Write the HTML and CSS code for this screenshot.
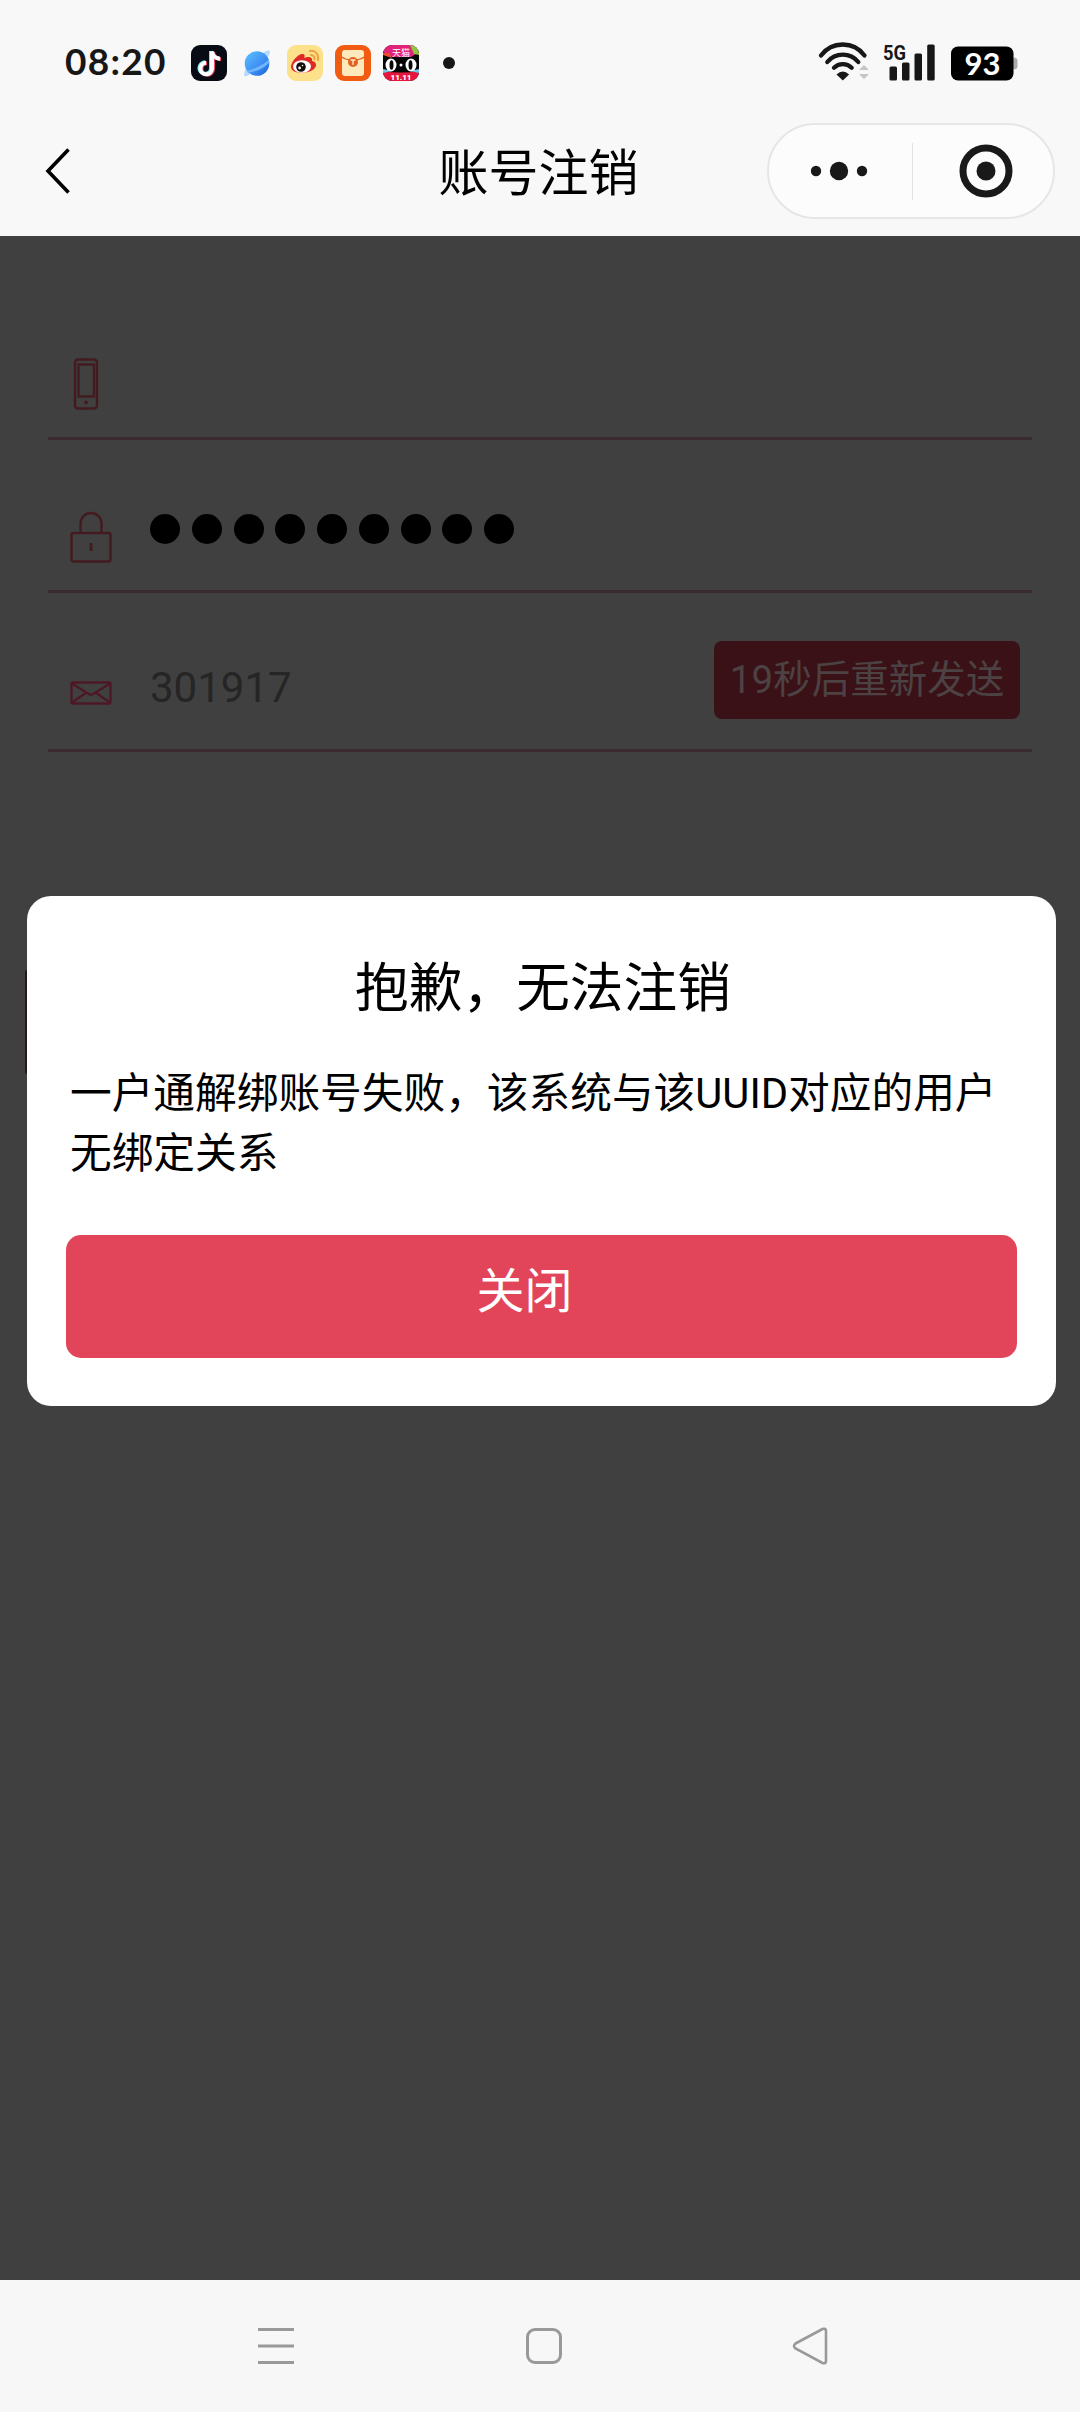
FILE: index.html
```html
<!DOCTYPE html>
<html lang="zh-CN">
<head>
<meta charset="utf-8">
<title>账号注销</title>
<link rel="stylesheet" href="styles.css">
</head>
<body>
<div class="screen">
  <header class="status">
    <span class="time">08:20</span>
    <div class="apps">
      <svg class="app" viewBox="0 0 36 36">
        <rect width="36" height="36" rx="9" fill="#080b14"/>
        <g fill="none" stroke-width="4">
          <path d="M20 6v17a5.800 5.800 0 1 1-6-5.800M20 6c.5 4 3.500 7 8 7.200" stroke="#6fe6e4"/>
          <path d="M22 7v17a5.800 5.800 0 1 1-6-5.800M22 7c.5 4 3.500 7 8 7.200" stroke="#f0486a"/>
          <path d="M21 6.500v17a5.800 5.800 0 1 1-6-5.800M21 6.500c.5 4 3.500 7 8 7.200" stroke="#fff"/>
        </g>
      </svg>
      <svg class="app" viewBox="0 0 36 36">
        <defs><linearGradient id="planet" x1="0" y1="0" x2="1" y2="1"><stop offset="0" stop-color="#5cc4ff"/><stop offset=".6" stop-color="#3d8cf2"/><stop offset="1" stop-color="#1560d2"/></linearGradient></defs>
        <path d="M26 6.500q5-2 5 0t-2 6L10 30q-5 2.500-5 0t2-7z" fill="#b4dbfd"/>
        <circle cx="18" cy="18.500" r="12.300" fill="url(#planet)"/>
        <path d="M30.300 17.500Q24 25 9.800 27.700L8 25.700Q22 22 30 14.500z" fill="#6fb6fb"/>
      </svg>
      <svg class="app" viewBox="0 0 36 36">
        <rect width="36" height="36" rx="9" fill="#fde08a"/>
        <path d="M4 22c0-6 8-14 12-13 2 0 2 3 1 4 4-2 9-1 8 3 5 1 5 5 2 8-5 5-22 6-23-2z" fill="#dd2a25"/>
        <ellipse cx="15" cy="21.500" rx="9" ry="6.300" fill="#fff"/>
        <circle cx="14" cy="22" r="4.800" fill="#15100e"/><circle cx="12.600" cy="23" r="1.400" fill="#fff"/><circle cx="15.500" cy="20.500" r=".8" fill="#fff"/>
        <path d="M23 6c6-1 9 4 8 9M24 10c2.500 0 4 2 3.500 4.500" fill="none" stroke="#eda23f" stroke-width="2" stroke-linecap="round"/>
      </svg>
      <svg class="app" viewBox="0 0 36 36">
        <rect width="36" height="36" rx="9" fill="#f25c12"/>
        <rect x="7" y="5" width="22" height="26" rx="3" fill="#fee9bd"/>
        <path d="M7 12c5 4 17 4 22 0" fill="none" stroke="#e2601f" stroke-width="1.300"/>
        <circle cx="18" cy="17" r="5" fill="#e2601f"/>
        <path d="M15.500 15h5M18 15v5" stroke="#fee9bd" stroke-width="1.400"/>
      </svg>
      <svg class="app" viewBox="0 0 36 36">
        <defs><clipPath id="tile"><rect width="36" height="36" rx="9"/></clipPath></defs>
        <g clip-path="url(#tile)">
          <rect width="36" height="36" fill="#060606"/>
          <path d="M0 0h36v7l-8 5H9L0 7z" fill="#e0247b"/>
          <path d="M27 0h9v10l-5-1z" fill="#8cc63f"/><path d="M0 8l6 0 3 5-9-3z" fill="#ef4c2e"/>
          <path d="M0 26q18 3 36 0v10H0z" fill="#e5173d"/><path d="M0 24l9 2-9 2zM36 24l-9 2 9 2z" fill="#73c6e8"/>
          <ellipse cx="8" cy="20" rx="5.500" ry="6.500" fill="#fff"/><ellipse cx="28" cy="20" rx="5.500" ry="6.500" fill="#fff"/>
          <ellipse cx="8.500" cy="20" rx="2" ry="4.700" fill="#080808"/><ellipse cx="27.500" cy="20" rx="2" ry="4.700" fill="#080808"/>
          <circle cx="18" cy="20" r="1.500" fill="#fff"/>
          <text class="tile-name" x="18" y="11">天猫</text>
          <text class="tile-date" x="18" y="34.500">11.11</text>
        </g>
      </svg>
      <i class="more"></i>
    </div>
    <svg class="signals" viewBox="-18 0 224 40">
      <g transform="translate(-16.500 0)">
        <path d="M7.500 13.500a27 27 0 0 1 43.500 0M13.800 20a20 20 0 0 1 31 0M20.500 25.700a12.500 12.500 0 0 1 17.700 0" fill="none" stroke="#171717" stroke-width="4.300" stroke-linecap="round"/>
        <path d="M23 32.500q6.300-6 12.600 0L29.300 38.500z" fill="#171717"/>
        <path d="M45.500 28l5-5 5 5zM45.500 32l5 5 5-5z" fill="#c5c5c5"/>
      </g>
      <g fill="#171717"><rect x="59.500" y="24.500" width="7.500" height="14" rx="1.500"/><rect x="72" y="20.500" width="7.500" height="18" rx="1.500"/><rect x="84.500" y="11.500" width="7.500" height="27" rx="1.500"/><rect x="97.200" y="2.500" width="7.500" height="36" rx="1.500"/></g>
      <text class="network" x="53" y="17.500" textLength="23" lengthAdjust="spacingAndGlyphs">5G</text>
      <path d="M183 15.500q4.500 0 4.500 3v6q0 3-4.500 3z" fill="#aaa"/>
      <rect x="121" y="4.500" width="62.500" height="34" rx="7" fill="#000"/>
      <text class="charge" x="152.500" y="33">93</text>
    </svg>
  </header>

  <nav class="titlebar">
    <svg class="back" viewBox="0 0 28 50"><path d="M25.500 3.500L5 25l20.500 21.500" fill="none" stroke="#000" stroke-width="3.600"/></svg>
    <h1 class="title">账号注销</h1>
    <div class="capsule">
      <svg class="dots" viewBox="0 0 58 20"><g fill="#191919"><circle cx="6" cy="10" r="5.200"/><circle cx="29" cy="10" r="9.200"/><circle cx="52" cy="10" r="5.200"/></g></svg>
      <i class="divider"></i>
      <svg class="target" viewBox="0 0 54 54"><circle cx="27" cy="27" r="23" fill="none" stroke="#191919" stroke-width="7"/><circle cx="27" cy="27" r="9.500" fill="#191919"/></svg>
    </div>
  </nav>

  <main class="page">
    <form class="form">
      <div class="row row-phone">
        <svg class="icon" viewBox="0 0 42 52"><g fill="none" stroke="#431a20" stroke-width="2.400"><rect x="5" y="1.500" width="22" height="49" rx="3"/><rect x="8.500" y="6.500" width="15.500" height="32"/></g><circle cx="16" cy="44.500" r="1.900" fill="#431a20"/></svg>
      </div>
      <div class="row row-password">
        <svg class="icon" viewBox="0 0 42 52"><g fill="none" stroke="#431a20" stroke-width="2.400"><rect x="1.500" y="22" width="39" height="28.500" rx="2"/><path d="M10.500 22V12.500a10.500 10.500 0 0 1 21 0V22"/><path d="M21 32v8" stroke-width="2.800"/></g></svg>
        <div class="mask"><i></i><i></i><i></i><i></i><i></i><i></i><i></i><i></i><i></i></div>
      </div>
      <div class="row row-code">
        <svg class="icon icon-mail" viewBox="0 0 42 24"><g fill="none" stroke="#4d1825" stroke-width="2.300"><rect x="1.500" y="1.500" width="39" height="21" rx="1"/><path d="M2 2.500l16 10q3 2 6 0l16-10M2 21.500l14.500-10M40 21.500l-14.500-10"/></g></svg>
        <span class="code">301917</span>
        <button class="resend" type="button">19秒后重新发送</button>
      </div>
    </form>
    <section class="dialog">
      <h2 class="dialog-title">抱歉，无法注销</h2>
      <p class="message">一户通解绑账号失败，该系统与该UUID对应的用户无绑定关系</p>
      <button class="close" type="button">关闭</button>
    </section>
  </main>

  <footer class="keys">
    <svg class="key" viewBox="0 0 40 40"><path d="M2 3.500h36M2 20h36M2 36.500h36" stroke="#999" stroke-width="3"/></svg>
    <svg class="key" viewBox="0 0 40 40"><rect x="3.500" y="3.500" width="33" height="33" rx="7.500" fill="none" stroke="#999" stroke-width="3"/></svg>
    <svg class="key" viewBox="0 0 40 40"><path d="M4.500 17.500L31.500 3q3.500-1 3.500 2v30q0 3-3.500 2L4.500 22.500q-3-2.500 0-5z" fill="none" stroke="#999" stroke-width="2.600"/></svg>
  </footer>
</div>
</body>
</html>
```
FILE: styles.css
```css
* { box-sizing: border-box; }
body {
  margin: 0;
  font-family: Roboto, "Noto Sans CJK SC", sans-serif;
  color: #000;
}
h1, h2, p { margin: 0; font-weight: 400; }
button { border: 0; padding: 0; font: inherit; }
svg { display: block; flex: none; }
.screen {
  width: 1080px;
  height: 2412px;
  display: flex;
  flex-direction: column;
  overflow: hidden;
  background: #404040;
}

.status {
  height: 110px;
  padding: 16px 0 0 65px;
  display: flex;
  align-items: center;
  background: #f8f8f8;
}
.time {
  width: 126px;
  margin-bottom: 4px;
  font: 700 37px/50px Lato, sans-serif;
  letter-spacing: 1.300px;
  color: #171717;
}
.apps { display: flex; align-items: center; gap: 12px; }
.app { width: 36px; height: 36px; }
.more { width: 12px; height: 12px; margin-left: 12px; border-radius: 50%; background: #171717; }
.tile-name { font: 9px "Noto Sans CJK SC", sans-serif; fill: #fff; text-anchor: middle; }
.tile-date { font: 900 8px Roboto, sans-serif; fill: #fff; text-anchor: middle; }
.signals { width: 224px; height: 40px; margin: 0 0 3px 357px; }
.network { font: 700 20px Roboto, sans-serif; fill: #171717; }
.charge { font: 700 31px Lato, sans-serif; fill: #fff; text-anchor: middle; }

.titlebar {
  height: 126px;
  padding: 13px 25px 17px 43px;
  display: grid;
  grid-template-columns: 288px 1fr 288px;
  align-items: center;
  background: #f8f8f8;
}
.back { width: 28px; height: 50px; }
.title { margin: 6px 0 0 -21px; font-size: 50px; line-height: 72px; text-align: center; }
.capsule {
  height: 96px;
  padding: 0 40px 0 41px;
  display: flex;
  align-items: center;
  justify-content: space-between;
  border: 2px solid #e6e6e6;
  border-radius: 48px;
  background: #fcfcfc;
}
.dots { width: 58px; height: 20px; }
.divider { width: 1px; height: 57px; margin-right: 3px; background: #e2e2e2; }
.target { width: 54px; height: 54px; }

.page { flex: 1; background: #404040; }
.form { height: 660px; padding: 0 48px; }
.row { display: flex; align-items: flex-start; padding-left: 22px; border-bottom: 3px solid #382a2d; }
.icon { width: 42px; height: 52px; }
.row-phone { height: 204px; padding-top: 122px; }
.row-password { height: 153px; padding-top: 71px; }
.mask { display: flex; gap: 11.750px; margin: 3px 0 0 38px; }
.mask i { width: 30px; height: 30px; border-radius: 50%; background: #000; }
.row-code { height: 159px; padding-top: 48px; padding-right: 12px; }
.icon-mail { height: 24px; margin-top: 40px; }
.code { margin: 22px auto 0 38px; font-size: 42px; line-height: 50px; color: #252525; }
.resend {
  width: 306px;
  height: 78px;
  border-radius: 8px;
  background: #391116;
  color: #4c4143;
  font-size: 38.500px;
  line-height: 78px;
  text-align: center;
}

.dialog {
  position: relative;
  width: 1029px;
  height: 510px;
  margin-left: 27px;
  padding: 53px 39px 48px;
  display: flex;
  flex-direction: column;
  border-radius: 24px;
  background: #fff;
}
/* edge of the submit button that lies behind the dialog */
.dialog::before {
  content: "";
  position: absolute;
  left: -2px;
  top: 74px;
  width: 2px;
  height: 104px;
  border-radius: 2px 0 0 2px;
  background: #241a1c;
}
.dialog-title { padding-left: 3px; font-size: 53.700px; line-height: 80px; text-align: center; }
.message { margin-top: 35px; padding: 0 3px 0 4px; font-size: 41.700px; line-height: 60px; }
.close {
  height: 123px;
  margin-top: auto;
  padding: 0 34px 9px 0;
  border-radius: 15px;
  background: #e24559;
  color: #fff;
  font-size: 48px;
  line-height: 114px;
}

.keys {
  height: 132px;
  padding: 0 249px 0 256px;
  display: flex;
  align-items: center;
  justify-content: space-between;
  background: #f7f7f7;
}
.key { width: 40px; height: 40px; }
```
